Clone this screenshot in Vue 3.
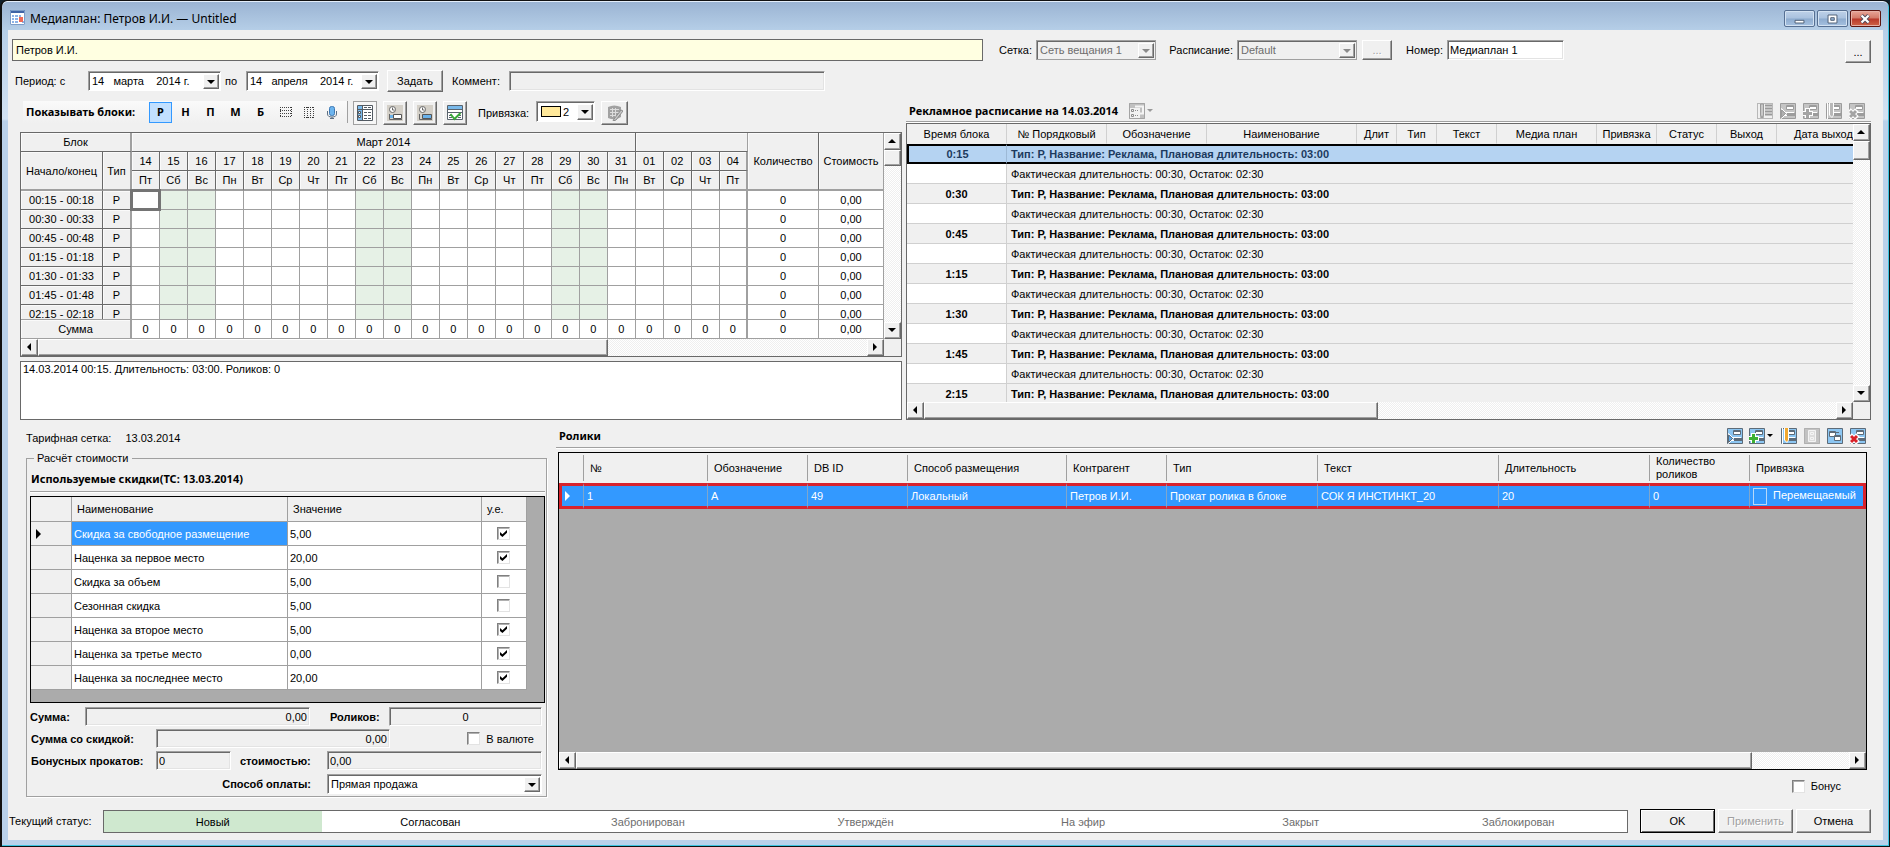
<script setup>
import { ref } from 'vue'

const names = ['Пт', 'Сб', 'Вс', 'Пн', 'Вт', 'Ср', 'Чт']
const days = Array.from({ length: 22 }, (_, i) => {
  const n = i < 18 ? 14 + i : i - 17
  return { num: String(n).padStart(2, '0'), name: names[i % 7], weekend: i % 7 === 1 || i % 7 === 2 }
})
days.forEach((d, i) => { if (i >= 17) d.weekend = false })
const blocks = ['00:15 - 00:18', '00:30 - 00:33', '00:45 - 00:48', '01:15 - 01:18', '01:30 - 01:33', '01:45 - 01:48', '02:15 - 02:18']
const kinds = ['Р', 'Н', 'П', 'М', 'Б']
const kind = ref('Р')

const scheduleCols = [
  ['Время блока', 100], ['№ Порядковый', 100], ['Обозначение', 100], ['Наименование', 150], ['Длит', 40], ['Тип', 40],
  ['Текст', 60], ['Медиа план', 100], ['Привязка', 60], ['Статус', 60], ['Выход', 60], ['Дата выхода', 100],
]
const times = ['0:15', '0:30', '0:45', '1:15', '1:30', '1:45', '2:15']

const discounts = ref([
  { name: 'Скидка за свободное размещение', value: '5,00', on: true },
  { name: 'Наценка за первое место', value: '20,00', on: true },
  { name: 'Скидка за объем', value: '5,00', on: false },
  { name: 'Сезонная скидка', value: '5,00', on: false },
  { name: 'Наценка за второе место', value: '5,00', on: true },
  { name: 'Наценка за третье место', value: '0,00', on: true },
  { name: 'Наценка за последнее место', value: '20,00', on: true },
])

const clipCols = [
  ['№', '1', 124], ['Обозначение', 'А', 100], ['DB ID', '49', 100], ['Способ размещения', 'Локальный', 159],
  ['Контрагент', 'Петров И.И.', 100], ['Тип', 'Прокат ролика в блоке', 151], ['Текст', 'СОК Я ИНСТИНКТ_20', 181],
  ['Длительность', '20', 151], ['Количество роликов', '0', 100],
]
const statuses = ['Новый', 'Согласован', 'Забронирован', 'Утверждён', 'На эфир', 'Закрыт', 'Заблокирован']
</script>

<template>
  <svg class="defs" aria-hidden="true">
    <symbol id="i-cal" viewBox="0 0 16 16">
      <path d="M0 1h15v14H0z" fill="#fff" /><path d="M0 0h15v3H0z" fill="#3e63a6" /><path d="M.5.500h14v14H.5z" fill="none" stroke="#7c9cc8" />
      <path d="M2 5h2v2H2zM5 5h3v2H5zM9 5h2v2H9zM2 8h2v2H2zM5 8h3v2H5zM2 11h2v2H2zM5 11h3v2H5zM12 11h2v2h-2z" fill="#8db2e6" />
      <path d="M9 7h4v5H9z" fill="#ee6a58" />
    </symbol>
    <symbol id="i-rows" viewBox="0 0 16 16">
      <path d="M2.500 3v10M13.500 3v10" stroke="#333" stroke-dasharray="1 1" />
      <path d="M2 3.500h12M2 6.500h12M2 9.500h12M2 12.500h12" stroke="#444" stroke-dasharray="1 1" />
    </symbol>
    <symbol id="i-cols" viewBox="0 0 16 16">
      <path d="M3.500 3v11M6.500 3v11M9.500 3v11M12.500 3v11" stroke="#444" stroke-dasharray="1 1" />
      <path d="M3 3.500h10M3 13.500h10" stroke="#333" stroke-dasharray="1 1" />
    </symbol>
    <symbol id="i-mic" viewBox="0 0 16 16">
      <rect x="5.500" y="2.500" width="5" height="9" rx="2" fill="#6cb4ee" stroke="#3c78b4" />
      <path d="M3.500 7v3q0 3 4.500 3t4.500-3V7M8 13v2M6 14.500h4" fill="none" stroke="#5c6f84" />
    </symbol>
    <symbol id="i-list" viewBox="0 0 16 16">
      <path d="M.5.500h15v15H.5z" fill="#fff" stroke="#525a62" /><path d="M1 1h4v14H1z" fill="#79b9ea" />
      <path d="M5.500 1v14M1 4.500h14" stroke="#525a62" /><path d="M1.500 6.500h2v2h-2zM1.500 10.500h2v2h-2z" fill="#fff" stroke="#525a62" />
      <path d="M7 2.500h7M7 7.500h7M7 10.500h7M7 13.500h7" stroke="#525a62" stroke-dasharray="3 1" />
    </symbol>
    <symbol id="i-clock" viewBox="0 0 16 16">
      <path d="M0 0h16v16H0z" fill="#d4d0c8" /><circle cx="5.500" cy="4.500" r="3" fill="#fff" stroke="#666" />
      <path d="M5.500 2.500v2.500h2M2.500 9v5.500H15" fill="none" stroke="#666" />
    </symbol>
    <symbol id="i-clock-a" viewBox="0 0 16 16">
      <use href="#i-clock" /><path d="M6.500 9.500h8v4h-8z" fill="#fff" stroke="#555" /><path d="M3 10h3v3H3z" fill="#69b1ea" />
    </symbol>
    <symbol id="i-clock-b" viewBox="0 0 16 16">
      <use href="#i-clock" /><path d="M5.500 9.500h9v4h-9z" fill="#69b1ea" stroke="#555" />
    </symbol>
    <symbol id="i-check" viewBox="0 0 16 16">
      <path d="M.5.500h15v14H.5z" fill="#fff" stroke="#59636d" /><path d="M1 1h14v3H1z" fill="#79b9ea" />
      <path d="M1 4.500h14M1 7.500h14M2 10.500h3M11 10.500h3M2 12.500h3M11 12.500h3" stroke="#59636d" /><path d="m3.500 9 4 5 6-6" fill="none" stroke="#38a838" stroke-width="2" />
    </symbol>
    <symbol id="i-edit-off" viewBox="0 0 16 16">
      <path d="M1 2q6-3 13 0v10q-6 4-13 1z" fill="#a2a2a2" /><path d="M3 4.500h9M3 7.500h9M3 10.500h6M5.500 3v9M8.500 3v9" stroke="#ddd" />
      <path d="m7 14 7-9 2 1-7 9-3 1z" fill="#c8c8c8" stroke="#8c8c8c" />
    </symbol>
    <symbol id="i-tree" viewBox="0 0 16 16">
      <path d="M0 0h16v16H0z" fill="#c0c0c0" /><path d="M1 5h10v10H1z" fill="#f2f2f2" /><path d="M6 3.500h8v7h-3" fill="none" stroke="#f4f4f4" stroke-width="2" />
      <path d="M2.500 6.500h2v2h-2zM2.500 11.500h2v2h-2z" fill="none" stroke="#8c8c8c" /><path d="M6 7.500h4M6 12.500h4" stroke="#8c8c8c" stroke-dasharray="1 1" /><path d="M.5.500h15v15H.5z" fill="none" stroke="#a4a4a4" />
    </symbol>
    <symbol id="i-base" viewBox="0 0 16 16">
      <path d="M.5.500h15v15H.5z" fill="var(--fill)" stroke="var(--line)" />
      <path d="M6.500 2.500h7v4h-7z" fill="#fff" stroke="var(--line)" /><path d="M7 3h6v1H7z" fill="var(--line)" /><path d="M5 9.500h9M5 12.500h9" stroke="#fff" /><path d="M7 10h8v3H7z" fill="var(--line)" />
    </symbol>
    <symbol id="i-run" viewBox="0 0 16 16"><use href="#i-base" /><path d="m1.500 5.500 5 5-5 5z" fill="var(--run)" stroke="#fff" /><path d="m1.500 7 4 3.500-4 4z" fill="var(--run)" stroke="var(--line)" /></symbol>
    <symbol id="i-add" viewBox="0 0 16 16"><use href="#i-base" /><path d="M4.500 5v10M0 10.500h10" stroke="#fff" stroke-width="5" /><path d="M4.500 6v9M0 10.500h9" stroke="var(--add)" stroke-width="3" /></symbol>
    <symbol id="i-pen" viewBox="0 0 16 16"><use href="#i-base" /><path d="M3 0h5v12l-2 3-3-3z" fill="#fff" /><path d="M4 0h3v12l-1 2-2-2z" fill="var(--pen)" /><path d="M1.500 0v16" stroke="#fff" /></symbol>
    <symbol id="i-penlist" viewBox="0 0 16 16"><path d="M0 0h16v16H0z" fill="#b8b8b8" /><path d="M7 1h8v14H7zM1 1h2v14H1z" fill="#f0f0f0" /><path d="M8 2.500h7M8 5.500h7M8 8.500h7M8 11.500h7" stroke="#999" stroke-width="2" /><path d="M3.500 1h3v11l-1.500 3-1.500-3z" fill="#c8c8c8" stroke="#999" /></symbol>
    <symbol id="i-del" viewBox="0 0 16 16"><use href="#i-base" /><path d="m0 7 8 8M8 7l-8 8" stroke="#fff" stroke-width="5" /><path d="m1 8 6 6M7 8l-6 6" stroke="var(--del)" stroke-width="3" /></symbol>
    <symbol id="i-form" viewBox="0 0 16 16"><path d="M0 0h16v16H0z" fill="#c2c2c2" /><path d="M4.500 2.500h7v11h-7zM6.500 4.500h3v2h-3zM6.500 9.500h3v2h-3z" fill="#ddd" stroke="#f4f4f4" /><path d="M.5.500h15v15H.5z" fill="none" stroke="#b0b0b0" /></symbol>
    <symbol id="i-copy" viewBox="0 0 16 16"><path d="M.5.500h15v15H.5z" fill="#8cc6f2" stroke="#5d6b78" /><path d="M2.500 3.500h6v5h-6zM7.500 7.500h6v5h-6z" fill="#fff" stroke="#5d6b78" /><path d="M3 4h5v1H3zM8 8h5v1H8zM9 4h3v1H9z" fill="#5d6b78" /></symbol>
  </svg>

  <div class="frame">
    <header class="titlebar">
      <svg class="ico"><use href="#i-cal" /></svg>
      <h1>Медиаплан: Петров И.И. — Untitled</h1>
      <button class="sys" aria-label="Свернуть"><svg viewBox="0 0 31 18"><path d="M10.500 10.500h10v3h-10z" fill="#fff" stroke="#45566e" /></svg></button>
      <button class="sys" aria-label="Развернуть"><svg viewBox="0 0 31 18"><path d="M10.500 4.500h10v9h-10zM13.500 7.500h4v3h-4z" fill="#fff" fill-rule="evenodd" stroke="#45566e" /></svg></button>
      <button class="sys close" aria-label="Закрыть"><svg viewBox="0 0 31 18"><path d="m11 5 8 8m0-8-8 8" stroke="#4c4a5c" stroke-width="4.500" /><path d="m11 5 8 8m0-8-8 8" stroke="#fff" stroke-width="2.500" /></svg></button>
    </header>

    <main class="client">
      <div class="top">
        <input class="name" aria-label="Наименование" value="Петров И.И.">
        <label for="net">Сетка:</label>
        <span class="combo off"><select id="net" disabled><option>Сеть вещания 1</option></select><i></i></span>
        <label for="sch">Расписание:</label>
        <span class="combo off"><select id="sch" disabled><option>Default</option></select><i></i></span>
        <button class="btn dots" disabled>...</button>
        <label for="num">Номер:</label>
        <input id="num" class="sunk" value="Медиаплан 1">
        <button class="btn more">...</button>
      </div>

      <div class="period">
        <label for="from">Период: с</label>
        <span class="combo date"><input id="from" value="14   марта    2014 г."><i></i></span>
        <label for="to">по</label>
        <span class="combo date"><input id="to" value="14   апреля    2014 г."><i></i></span>
        <button class="btn set">Задать</button>
        <label for="com">Коммент:</label>
        <input id="com" class="sunk gray comment">
      </div>

      <div class="split">
        <section class="plan">
          <div class="toolbar">
            <div class="strip">
              <b class="heavy">Показывать блоки:</b>
              <button v-for="k in kinds" :key="k" class="kind letter heavy" :class="{ on: k === kind }" @click="kind = k">{{ k }}</button>
              <button class="kind" aria-label="Строки"><svg class="ico"><use href="#i-rows" /></svg></button>
              <button class="kind" aria-label="Столбцы"><svg class="ico"><use href="#i-cols" /></svg></button>
              <button class="kind" aria-label="Микрофон"><svg class="ico"><use href="#i-mic" /></svg></button>
            </div>
            <button class="btn tool flat" aria-label="Список"><svg class="ico"><use href="#i-list" /></svg></button>
            <button class="btn tool" aria-label="Время начала"><svg class="ico"><use href="#i-clock-a" /></svg></button>
            <button class="btn tool" aria-label="Время конца"><svg class="ico"><use href="#i-clock-b" /></svg></button>
            <button class="btn tool" aria-label="Проверить"><svg class="ico"><use href="#i-check" /></svg></button>
            <label for="bind">Привязка:</label>
            <span class="combo bind"><select id="bind"><option>2</option></select><em></em><i></i></span>
            <button class="btn tool wide" aria-label="Изменить" disabled><svg class="ico"><use href="#i-edit-off" /></svg></button>
          </div>

          <div class="grid-box">
            <div class="grid-main">
              <div class="clip">
                <table class="days">
                  <colgroup><col class="c-time"><col class="c-type"><col v-for="d in 22" :key="d"><col class="c-qty"><col class="c-cost"></colgroup>
                  <thead>
                    <tr><th colspan="2" class="thick">Блок</th><th colspan="18">Март 2014</th><th colspan="4" class="month2"></th><th rowspan="3" class="tall">Количество</th><th rowspan="3" class="tall soft">Стоимость</th></tr>
                    <tr><th rowspan="2" class="tall">Начало/конец</th><th rowspan="2" class="tall thick">Тип</th><th v-for="(d, i) in days" :key="i" :class="{ thick: i === 21 }">{{ d.num }}</th></tr>
                    <tr><th v-for="(d, i) in days" :key="i" class="tall" :class="{ thick: i === 21 }">{{ d.name }}</th></tr>
                  </thead>
                  <tbody>
                    <tr v-for="(b, r) in blocks" :key="b">
                      <th>{{ b }}</th><th class="thick">Р</th>
                      <td v-for="(d, i) in days" :key="i" :class="{ weekend: d.weekend, thick: i === 21, cursor: r === 0 && i === 0 }"></td>
                      <td>0</td><td>0,00</td>
                    </tr>
                  </tbody>
                </table>
              </div>
              <table class="days sums">
                <colgroup><col class="c-time"><col class="c-type"><col v-for="d in 22" :key="d"><col class="c-qty"><col class="c-cost"></colgroup>
                <tbody><tr><th colspan="2" class="thick">Сумма</th><td v-for="i in 22" :key="i" :class="{ thick: i === 22 }">0</td><td>0</td><td>0,00</td></tr></tbody>
              </table>
            </div>
            <div class="vbar"><button class="up" aria-label="Вверх"></button><span class="thumb short"></span><button class="down" aria-label="Вниз"></button></div>
            <div class="hbar"><button class="left" aria-label="Влево"></button><span class="thumb t-plan"></span><button class="right" aria-label="Вправо"></button></div>
          </div>
          <div class="info">14.03.2014 00:15. Длительность: 03:00. Роликов: 0</div>
        </section>

        <section class="schedule">
          <div class="bar">
            <h2 class="heavy">Рекламное расписание на 14.03.2014</h2>
            <button class="bare" disabled aria-label="Вид"><svg class="ico"><use href="#i-tree" /></svg><u></u></button>
            <div class="icons off">
              <button v-for="n in ['penlist', 'run', 'add', 'pen', 'del']" :key="n" class="bare" disabled :aria-label="n"><svg class="ico"><use :href="'#i-' + n" /></svg></button>
            </div>
          </div>
          <div class="sched-box">
            <div class="clip">
              <table class="sched">
                <colgroup><col v-for="c in scheduleCols" :key="c[0]" :style="{ width: c[1] + 'px' }"></colgroup>
                <thead><tr><th v-for="c in scheduleCols" :key="c[0]">{{ c[0] }}</th></tr></thead>
                <tbody>
                  <template v-for="(t, i) in times" :key="t">
                    <tr class="head" :class="{ sel: i === 0 }"><td>{{ t }}</td><td colspan="11">Тип: Р, Название: Реклама, Плановая длительность: 03:00</td></tr>
                    <tr v-if="i < 6"><td></td><td colspan="11">Фактическая длительность: 00:30, Остаток: 02:30</td></tr>
                  </template>
                </tbody>
              </table>
            </div>
            <div class="vbar"><button class="up" aria-label="Вверх"></button><span class="thumb"></span><button class="down" aria-label="Вниз"></button></div>
            <div class="hbar"><button class="left" aria-label="Влево"></button><span class="thumb t-sched"></span><button class="right" aria-label="Вправо"></button></div>
          </div>
        </section>
      </div>

      <div class="lower">
        <section class="cost">
          <p class="tariff"><span>Тарифная сетка:</span><span>13.03.2014</span></p>
          <fieldset>
            <legend>Расчёт стоимости</legend>
            <h2 class="heavy">Используемые скидки(ТС: 13.03.2014)</h2>
            <div class="disc-box">
              <table class="disc">
                <colgroup><col class="d-row"><col class="d-name"><col class="d-val"><col class="d-ue"></colgroup>
                <thead><tr><th></th><th>Наименование</th><th>Значение</th><th>у.е.</th></tr></thead>
                <tbody>
                  <tr v-for="(d, i) in discounts" :key="d.name" :class="{ cur: i === 0 }">
                    <th><s v-if="i === 0"></s></th><td>{{ d.name }}</td><td>{{ d.value }}</td><td><input v-model="d.on" type="checkbox" :aria-label="d.name"></td>
                  </tr>
                </tbody>
              </table>
            </div>
            <div class="fields">
              <div class="line"><label for="sum" class="w-sum">Сумма:</label><input id="sum" class="sunk gray end f-sum" value="0,00"><label for="cnt" class="w-cnt">Роликов:</label><input id="cnt" class="sunk gray mid grow" value="0"></div>
              <div class="line"><label for="dsum" class="w-long">Сумма со скидкой:</label><input id="dsum" class="sunk gray end f-dsum" value="0,00"><span class="grow"></span><label class="chk"><input type="checkbox">В валюте</label></div>
              <div class="line"><label for="bon" class="w-long">Бонусных прокатов:</label><input id="bon" class="sunk gray f-bon" value="0"><label for="bcost" class="w-cost">стоимостью:</label><input id="bcost" class="sunk gray grow" value="0,00"></div>
              <div class="line pay"><label for="pay" class="w-pay">Способ оплаты:</label><span class="combo grow"><select id="pay"><option>Прямая продажа</option></select><i></i></span></div>
            </div>
          </fieldset>
        </section>

        <section class="clips">
          <div class="bar">
            <h2 class="heavy">Ролики</h2>
            <div class="icons">
              <button class="bare" aria-label="Запустить"><svg class="ico"><use href="#i-run" /></svg></button>
              <button class="bare drop" aria-label="Добавить"><svg class="ico"><use href="#i-add" /></svg><u></u></button>
              <button class="bare" aria-label="Изменить"><svg class="ico"><use href="#i-pen" /></svg></button>
              <button class="bare" disabled aria-label="Свойства"><svg class="ico"><use href="#i-form" /></svg></button>
              <button class="bare" aria-label="Копировать"><svg class="ico"><use href="#i-copy" /></svg></button>
              <button class="bare" aria-label="Удалить"><svg class="ico"><use href="#i-del" /></svg></button>
            </div>
          </div>
          <div class="clips-box">
            <div class="clips-view">
              <table class="cliptab">
                <colgroup><col class="k-row"><col v-for="c in clipCols" :key="c[0]" :style="{ width: c[2] + 'px' }"><col></colgroup>
                <thead><tr><th></th><th v-for="c in clipCols" :key="c[0]">{{ c[0] }}</th><th>Привязка</th></tr></thead>
                <tbody><tr><td class="arrow"><s></s></td><td v-for="c in clipCols" :key="c[0]">{{ c[1] }}</td><td class="bindcell"><i></i>Перемещаемый</td></tr></tbody>
              </table>
            </div>
            <div class="hbar"><button class="left" aria-label="Влево"></button><span class="thumb t-clips"></span><button class="right" aria-label="Вправо"></button></div>
          </div>
          <label class="chk bonus"><input type="checkbox">Бонус</label>
        </section>
      </div>

      <footer class="footer">
        <span class="st-label">Текущий статус:</span>
        <ol class="status"><li v-for="(s, i) in statuses" :key="s" :class="{ now: i === 0, next: i === 1 }">{{ s }}</li></ol>
        <button class="btn ok">OK</button>
        <button class="btn" disabled>Применить</button>
        <button class="btn">Отмена</button>
      </footer>
    </main>
  </div>
</template>

<style>
body { margin: 0; background: #10202c; }
</style>

<style scoped>
* { box-sizing: border-box; }
.defs { position: absolute; width: 0; height: 0; }
.frame {
  display: flex; flex-direction: column; min-height: 100vh; padding: 0 6px 6px 6px;
  border: 1px solid #111; border-left-width: 2px; border-radius: 7px 7px 0 0;
  background: linear-gradient(#9ab3d2, #b6cfe8 30px, #d3e2f2 118px, #b9d1ea 120px);
  box-shadow: inset -1px -1px #3cc4e0, inset 0 1px #e4eefa;
  font: 11px/14px "Liberation Sans", Arial, sans-serif; color: #000;
}
button, input, select { font: inherit; color: inherit; margin: 0; padding: 0; border-radius: 0; outline: 0; }
h1, h2, p, ol { margin: 0; padding: 0; font-weight: normal; font-size: 11px; }
.heavy { font-family: "Noto Sans", "Open Sans", sans-serif; font-size: 11px; font-weight: bold; white-space: nowrap; }
.ico { width: 16px; height: 16px; display: block; flex: none; }
label { white-space: nowrap; }

.titlebar { display: flex; align-items: flex-start; height: 29px; padding: 9px 2px 0 2px; gap: 2px; flex: none; }
.titlebar h1 { flex: 1; padding-left: 2px; font: 12px/18px "Noto Sans", "Open Sans", sans-serif; }
.sys { width: 31px; height: 17px; border: 1px solid #566f92; border-radius: 2px; background: linear-gradient(#bed1e8, #a9c1de 48%, #8dabce 52%, #a6c1e0); box-shadow: inset 0 0 0 1px #d3e2f2; }
.sys svg { display: block; width: 29px; height: 16px; }
.sys.close { border-color: #5c1510; background: linear-gradient(#e8a598, #d37a68 48%, #b8382a 52%, #cf6448); box-shadow: inset 0 0 0 1px #e6b0a6; }

.client { flex: 1; background: #f0f0f0; padding: 9px 12px 0 0; }
.btn { background: #f0f0f0; border: 1px solid; border-color: #fff #696969 #696969 #fff; box-shadow: inset -1px -1px #a0a0a0; text-align: center; }
.btn:disabled { color: #a0a0a0; text-shadow: 1px 1px #fff; }
.sunk { height: 20px; min-width: 0; padding: 0 2px; border: 1px solid; border-color: #a0a0a0 #fff #fff #a0a0a0; box-shadow: inset 1px 1px #696969, inset -1px -1px #e3e3e3; background: #fff; }
.gray { background: #f0f0f0; }
.end { text-align: right; }
.mid { text-align: center; }
.combo { position: relative; display: block; height: 20px; border: 1px solid; border-color: #a0a0a0 #fff #fff #a0a0a0; box-shadow: inset 1px 1px #696969; background: #fff; padding: 1px; }
.combo select, .combo input { display: block; width: 100%; height: 100%; border: 0; background: none; appearance: none; padding: 0 18px 0 2px; color: #000; opacity: 1; white-space: pre; }
.combo i { position: absolute; right: 1px; top: 2px; bottom: 1px; width: 16px; background: #f0f0f0; border: 1px solid; border-color: #fff #696969 #696969 #fff; box-shadow: inset -1px -1px #a0a0a0; pointer-events: none; }
.combo i::after { content: ""; position: absolute; left: 3px; top: 5px; border: 4px solid transparent; border-top-color: #000; border-bottom: 0; }
.combo.off { background: #f0f0f0; border-color: #a0a0a0; }
.combo.off select { color: #6d6d6d; }
.combo.off i::after { border-top-color: #8a8a8a; }

.top { display: grid; grid-template-columns: minmax(0, 971fr) 53px 120px 81px 120px 35px 55px 117px minmax(26px, 307fr); align-items: start; height: 24px; padding-left: 4px; }
.top label { text-align: right; padding: 4px 4px 0 0; }
.top > :not(.name):not(label) { margin-top: 1px; }
.name { height: 22px; min-width: 0; border: 1px solid #696969; background: #ffffe1; padding: 0 3px; }
.dots { height: 20px; width: 30px; justify-self: end; }
.more { height: 23px; width: 26px; justify-self: end; }

.period { display: flex; align-items: center; height: 23px; margin-top: 6px; padding-left: 7px; }
.period label:first-child { width: 73px; }
.date { width: 133px; }
.period label + .date + label { width: 25px; padding-left: 4px; }
.set { width: 56px; height: 22px; margin: 0 9px 0 8px; }
.set + label { width: 57px; }
.comment { width: 316px; }

.split { display: grid; grid-template-columns: minmax(0, 882fr) minmax(0, 965fr); gap: 4px; margin-top: 9px; padding-left: 12px; }
.toolbar { display: flex; align-items: flex-start; height: 31px; }
.strip { display: flex; align-items: center; height: 22px; width: 325px; margin-left: 3px; padding-left: 3px; background: linear-gradient(#fafafa, #f0f0f0); border-right: 1px solid #a0a0a0; flex: none; }
.strip b { width: 123px; }
.kind { width: 23px; height: 21px; padding: 0; border: 1px solid transparent; background: none; display: grid; place-items: center; flex: none; }
.kind.letter { margin-right: 2px; }
.kind.on { background: #c2e0ff; border-color: #3399ff; }
.tool { width: 24px; height: 24px; margin-left: 6px; display: grid; place-items: center; flex: none; }
.tool.wide { width: 27px; }
.strip + .tool { margin-left: 5px; }
.tool.flat { border-color: #a0a0a0; box-shadow: none; background: #f6f6f6; }
.toolbar label { padding: 5px 0 0 11px; width: 69px; }
.bind { width: 59px; height: 21px; }
.bind select { padding-left: 25px; }
.bind em { position: absolute; left: 4px; top: 4px; width: 20px; height: 11px; border: 1px solid #000; background: #ffe89a; pointer-events: none; }

.grid-box, .sched-box { display: grid; grid-template-columns: minmax(0, 1fr) 17px; border: 1px solid #696969; }
.grid-box .clip { height: 187px; overflow: hidden; border-bottom: 1px solid #a0a0a0; }
.days { table-layout: fixed; width: 100%; border-spacing: 0; text-align: center; }
.c-time { width: 82px; }
.c-type { width: 29px; }
.c-qty { width: 71px; }
.c-cost { width: 65px; }
.days th, .days td { height: 19px; padding: 0; font-weight: normal; border: 0 solid #a0a0a0; border-width: 0 1px 1px 0; background: #fff; line-height: 16px; white-space: nowrap; position: relative; }
.days th { background: #f0f0f0; border-color: #696969; box-shadow: inset 1px 1px #fafafa; }
.days th.tall { border-bottom: 2px solid #a0a0a0; }
.days thead tr:last-child th { height: 20px; }
.days th.thick, .days td.thick { border-right: 2px solid #a0a0a0; }
.days th.month2 { border-right-color: #a0a0a0; }
.days th.soft { border-right-color: #a0a0a0; }
.days td.weekend { background: #e6f1e6; }
.days td.cursor::after { content: ""; position: absolute; z-index: 2; inset: -2px; border: 3px solid #747474; }
.days.sums th { border-color: #a0a0a0; }
.info { height: 59px; margin-top: 4px; border: 1px solid #696969; background: #fff; padding: 0 2px; }

.hbar, .vbar { display: flex; background: repeating-conic-gradient(#fff 0 25%, #efefef 0 50%) 0 0 / 2px 2px; }
.hbar { height: 17px; }
.grid-box .hbar, .sched-box .hbar { grid-column: 1; }
.vbar { flex-direction: column; width: 17px; }
.hbar button, .vbar button, .thumb { position: relative; flex: none; width: 17px; height: 17px; border: 1px solid; border-color: #fff #696969 #696969 #fff; box-shadow: inset -1px -1px #a0a0a0; background: #f0f0f0; }
.hbar .right { margin-left: auto; }
.vbar .down { margin-top: auto; }
.hbar button::after, .vbar button::after { content: ""; position: absolute; left: 5px; top: 3px; border: 4px solid transparent; }
.left::after { border-left: 0 !important; border-right-color: #000 !important; }
.right::after { border-right: 0 !important; border-left-color: #000 !important; }
.vbar button::after { left: 3px; top: 5px; }
.up::after { border-top: 0 !important; border-bottom-color: #000 !important; }
.down::after { border-bottom: 0 !important; border-top-color: #000 !important; }
.vbar .thumb { height: 19px; }
.vbar .short { height: 16px; }
.hbar .thumb { width: auto; }
.hbar .t-plan { flex: 0 1 66%; }
.hbar .t-sched { flex: 0 1 48%; }
.hbar .t-clips { flex: 0 1 90%; }

.bar { display: flex; align-items: center; border-bottom: 1px solid #a0a0a0; box-shadow: 0 1px #fff; }
.schedule .bar { height: 21px; padding: 0 6px 1px 3px; margin-bottom: 1px; }
.bare { border: 0; background: none; display: flex; align-items: center; }
.schedule h2 + .bare { margin-left: 11px; }
.bare u { border: 3px solid transparent; border-top-color: #000; border-bottom: 0; margin-left: 2px; }
.bare:disabled u { border-top-color: #999; }
.icons { margin-left: auto; display: flex; gap: 7px; --fill: #8cc6f2; --line: #5d6b78; --run: #5aa9ea; --add: #3cb034; --pen: #f0a830; --del: #d82028; }
.icons.off { --fill: #c4c4c4; --line: #9c9c9c; --run: #b0b0b0; --add: #a4a4a4; --pen: #b8b8b8; --del: #a4a4a4; }

.sched-box .clip { height: 278px; overflow: hidden; }
.sched { table-layout: fixed; width: 970px; border-spacing: 0; }
.sched th, .sched td { height: 20px; padding: 0; line-height: 18px; white-space: nowrap; border: 0 solid #d0d0d0; border-width: 0 1px 1px 0; font-weight: normal; text-align: center; }
.sched th { border-bottom-color: #f0f0f0; }
.sched td + td { text-align: left; padding-left: 4px; }
.sched td:first-child { background: #fff; }
.sched .head td { font-weight: bold; background: #f0f0f0; }
.sched .sel td { background: #b5d3f2; border-top: 2px solid #000; border-bottom: 2px solid #000; border-right-color: #9db9d6; color: #1c3a5e; line-height: 16px; }
.sched .sel td:first-child { border-left: 2px solid #000; }

.lower { display: grid; grid-template-columns: minmax(0, 548fr) minmax(0, 1315fr); }
.cost { padding: 11px 9px 0 18px; }
.tariff { display: flex; gap: 14px; height: 20px; align-items: flex-start; }
fieldset { margin: 0; min-width: 0; padding: 0 1px 2px 3px; border: 1px solid #a0a0a0; box-shadow: 1px 1px #fff; }
legend { margin-left: 4px; padding: 0 4px 0 3px; height: 14px; }
fieldset h2 { height: 27px; line-height: 28px; padding-left: 1px; border-bottom: 1px solid #a0a0a0; box-shadow: 0 1px #fff; }
.disc-box { margin: 4px 0; height: 207px; border: 1px solid #000; background: #ababab; }
.disc { table-layout: fixed; width: 496px; max-width: 100%; border-spacing: 0; }
.d-row { width: 41px; }
.d-name { width: 216px; }
.d-val { width: 194px; }
.d-ue { width: 45px; }
.disc th, .disc td { height: 24px; padding: 0 2px; border: 0 solid #a0a0a0; border-width: 0 1px 1px 0; text-align: left; font-weight: normal; background: #fff; white-space: nowrap; }
.disc th { background: #f0f0f0; }
.disc thead th { height: 25px; padding-left: 5px; }
.disc .cur td:nth-child(2) { background: #3399ff; color: #fff; }
.disc td:last-child { padding: 0 0 0 15px; }
s { display: block; width: 0; border: 5px solid transparent; border-left-color: #000; border-right: 0; margin-left: 3px; }
input[type=checkbox] { appearance: none; display: block; position: relative; flex: none; width: 13px; height: 13px; background: #fff; border: 1px solid; border-color: #808080 #e3e3e3 #e3e3e3 #808080; box-shadow: inset 1px 1px #b0b0b0; }
input[type=checkbox]:checked::after { content: ""; position: absolute; inset: 2px; background: #000; clip-path: polygon(0 30%, 35% 62%, 100% 0, 100% 40%, 35% 100%, 0 70%); }

.fields { display: flex; flex-direction: column; gap: 3px; padding-right: 3px; }
.line { display: flex; align-items: center; height: 19px; font-weight: bold; }
.line input, .line .combo { font-weight: normal; }
.line .sunk { height: 19px; }
.line.pay { height: 21px; }
.grow { flex: 1; min-width: 0; }
.w-sum { width: 55px; }
.f-sum { width: 225px; }
.w-cnt { width: 79px; padding-left: 20px; }
.w-long { width: 126px; padding-left: 1px; }
.f-dsum { width: 234px; }
.f-bon { width: 75px; }
.w-cost { width: 96px; padding-left: 9px; }
.w-pay { width: 297px; text-align: right; padding-right: 16px; }
.chk { display: flex; align-items: center; gap: 6px; font-weight: normal; }
.fields .chk { padding-right: 8px; }

.clips { display: flex; flex-direction: column; }
.clips .bar { height: 28px; padding: 4px 5px 0 3px; }
.drop { margin-right: 1px; margin-left: -1px; }
.clips-box { display: flex; flex-direction: column; margin: 4px 4px 0 2px; height: 318px; border: 1px solid #000; background: #ababab; }
.clips-view { flex: 1; overflow: hidden; }
.cliptab { table-layout: fixed; width: 100%; border-spacing: 0; }
.k-row { width: 25px; }
.cliptab th { height: 30px; padding: 0 30px 0 6px; text-align: left; font-weight: normal; line-height: 13px; background: linear-gradient(#a0a0a0, #a0a0a0) right 0 bottom 2px / 1px 26px no-repeat #f0f0f0; }
.cliptab th:not(:nth-last-child(2)) { padding-right: 0; white-space: nowrap; }
.cliptab th:last-child { background-image: none; }
.cliptab td { height: 26px; padding: 0 3px; background: #3399ff; color: #fff; border: 0 solid #7fa6cc; border-width: 3px 1px 3px 0; border-top-color: #d8232d; border-bottom-color: #d8232d; white-space: nowrap; overflow: hidden; }
.cliptab td.arrow { border-left: 3px solid #d8232d; padding: 0; }
.cliptab td:last-child { border-right: 3px solid #d8232d; }
.arrow s { border-left-color: #fff; }
.bindcell i { display: inline-block; vertical-align: middle; width: 14px; height: 17px; margin-right: 6px; border: 1px solid #b8d8f8; }
.bonus { align-self: flex-end; margin: 9px 30px 0 0; }

.footer { display: flex; align-items: center; gap: 3px; height: 24px; margin-top: 12px; padding-left: 1px; }
.st-label { width: 91px; white-space: nowrap; }
.status { flex: 1; display: flex; height: 23px; border: 1px solid #696969; background: #fff; list-style: none; margin-right: 9px; }
.status li { flex: 1; text-align: center; line-height: 23px; color: #6d6d6d; }
.status .now { background: #cfe8cf; color: #000; }
.status .next { color: #000; }
.footer .btn { width: 75px; height: 24px; }
.footer .ok { border-color: #000; box-shadow: inset 1px 1px #fff, inset -1px -1px #696969; }
</style>
